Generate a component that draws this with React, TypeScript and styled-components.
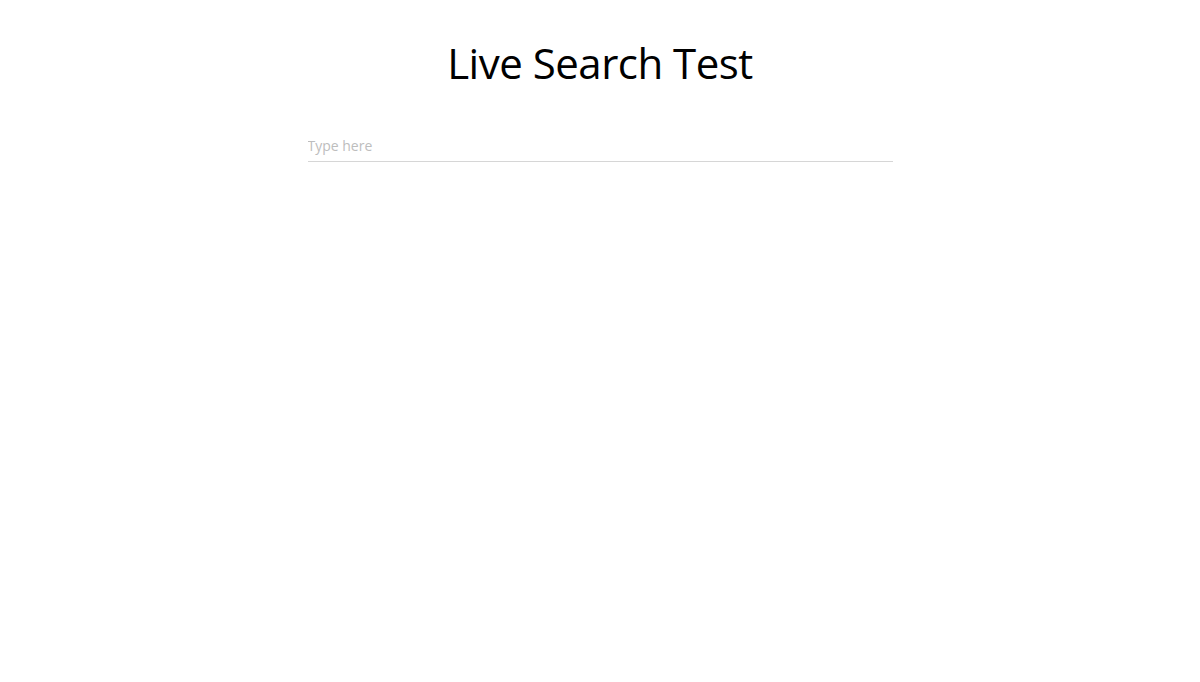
import React, { useState } from 'react'
import styled, { createGlobalStyle } from 'styled-components'

const GlobalStyle = createGlobalStyle`
	body {
		margin: 0;
		background: #fff;
		font-family: 'Open Sans', 'Noto Sans', sans-serif;
	}
`

const Page = styled.main`
	display: flex;
	flex-direction: column;
	align-items: center;
	padding-top: 35px;
`

const Title = styled.h1`
	margin: 0;
	font-size: 42px;
	font-weight: 400;
	line-height: 56px;
	color: #000;
	letter-spacing: -0.5px;
`

const SearchInput = styled.input`
	margin-top: 41px;
	width: 585px;
	box-sizing: border-box;
	border: none;
	border-bottom: 1px solid #d6d6d6;
	padding: 4px 0 6px;
	font-family: inherit;
	font-size: 14px;
	color: #333;
	outline: none;
	background: transparent;

	&::placeholder {
		color: #bdbdbd;
	}
`

export default function App() {
	const [query, setQuery] = useState('')

	return (
		<>
			<GlobalStyle />
			<Page>
				<Title>Live Search Test</Title>
				<SearchInput
					type='text'
					placeholder='Type here'
					value={query}
					onChange={e => setQuery(e.target.value)}
				/>
			</Page>
		</>
	)
}
